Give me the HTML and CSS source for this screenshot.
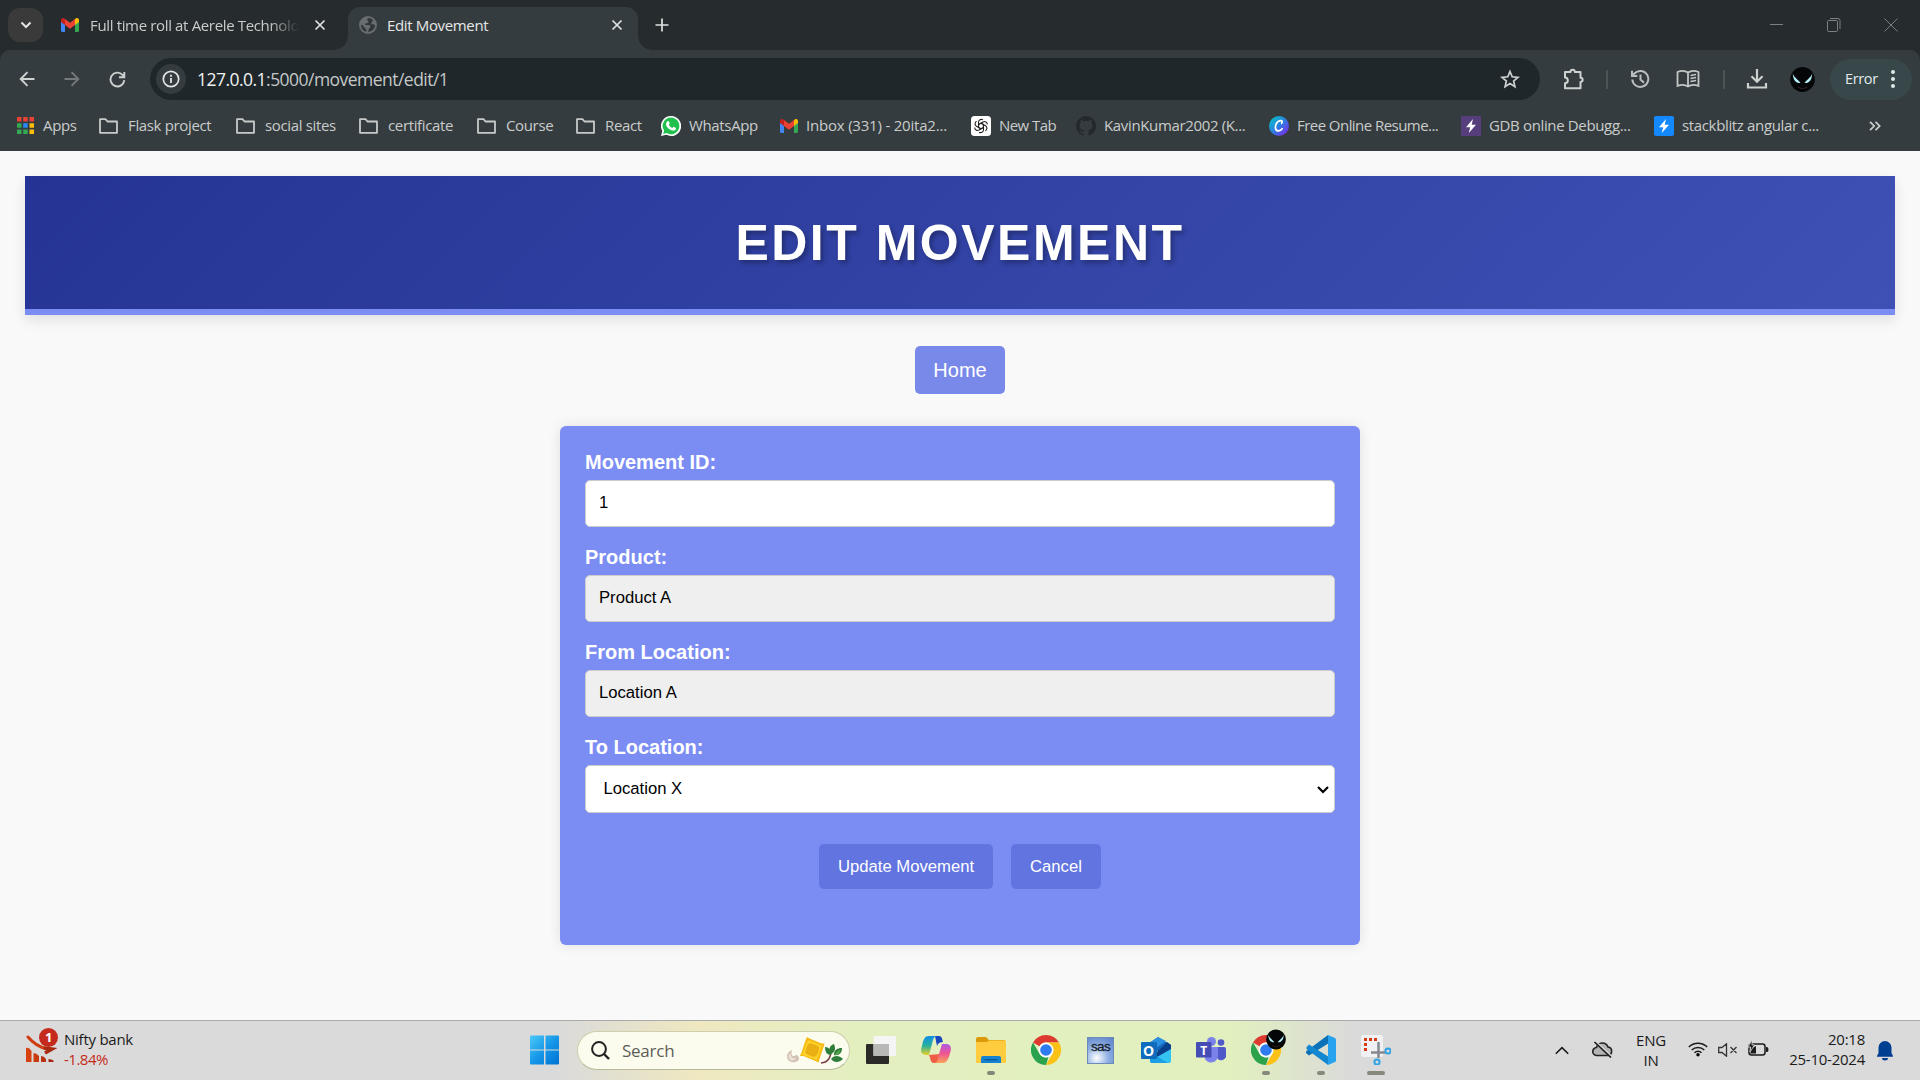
FILE: index.html
```html
<!DOCTYPE html>
<html lang="en">
<head>
<meta charset="utf-8">
<title>Edit Movement</title>
<link rel="stylesheet" href="styles.css">
</head>
<body>
<svg class="defs" aria-hidden="true">
  <defs>
    <symbol id="gmail" viewBox="0 0 18 14">
      <path fill="#4285f4" d="M0 3v9.5C0 13.300.7 14 1.500 14H4V6z"/>
      <path fill="#34a853" d="M18 3v9.500c0 .8-.7 1.500-1.500 1.500H14V6z"/>
      <path fill="#fbbc04" d="M14 1v6l4-3V2c0-1.900-2-2.500-3.300-1.500z"/>
      <path fill="#ea4335" d="M4 7V1l5 3.800L14 1v6l-5 3.800z"/>
      <path fill="#c5221f" d="M0 2v2l4 3V1L3.300.5C2-.5 0 .1 0 2z"/>
    </symbol>
    <symbol id="folder" viewBox="0 0 21 18">
      <path fill="none" stroke="#c7cac9" stroke-width="1.800" stroke-linejoin="round" d="M2 2.200h5.500l2 2.300H19v11.300H2z"/>
    </symbol>
    <symbol id="close" viewBox="0 0 12 12">
      <path fill="none" stroke="#dfe2e1" stroke-width="1.700" d="M1.500 1.500l9 9M10.500 1.500l-9 9"/>
    </symbol>
    <symbol id="bolt" viewBox="0 0 20 20">
      <path fill="#fff" d="M12 3L5 11.300h4.200L7.800 17 15 8.700h-4.300z"/>
    </symbol>
    <symbol id="chrome" viewBox="0 0 30 30">
      <path fill="#dd3a30" d="M15 0a15 15 0 0 1 13 7.500H15a7.500 7.500 0 0 0-6.500 3.750L2 7.500A15 15 0 0 1 15 0z"/>
      <path fill="#fbc116" d="M28 7.500A15 15 0 0 1 15 30l6.500-11.250A7.500 7.500 0 0 0 21.500 11.250L15 7.500z"/>
      <path fill="#2ba24c" d="M2 7.500l6.500 11.250a7.500 7.500 0 0 0 9 3.300L15 30A15 15 0 0 1 2 7.500z"/>
      <circle cx="15" cy="15" r="7.400" fill="#fff"/>
      <circle cx="15" cy="15" r="5.800" fill="#2f7cf0"/>
    </symbol>
    <symbol id="venom" viewBox="0 0 25 25">
      <ellipse cx="12.500" cy="12.500" rx="12.300" ry="12.500" fill="#050607"/>
      <path fill="#b5f1f8" d="M2.800 6.500c1 3.500 4.500 5.500 7.700 9.500C6.500 16.500 3 13.500 2.800 6.500zM22.200 6.500c-1 3.500-4.500 5.500-7.700 9.500 4 .5 7.500-2.500 7.700-9.500z"/>
      <path fill="none" stroke="#3b2324" d="M8 20c3 2 6 2 9 0"/>
    </symbol>
  </defs>
</svg>

<div class="browser">
  <div class="tabstrip">
    <div class="tabsearch"><svg width="12" height="8" viewBox="0 0 12 8"><path fill="none" stroke="#e3e5e4" stroke-width="2" d="M1.500 1.500L6 6l4.500-4.500"/></svg></div>
    <div class="tab">
      <svg width="18" height="14"><use href="#gmail"/></svg>
      <span class="tab-title faded">Full time roll at Aerele Technolo</span>
      <svg class="x" width="12" height="12"><use href="#close"/></svg>
    </div>
    <div class="tab active">
      <svg width="18" height="18" viewBox="0 0 18 18"><circle cx="9" cy="9" r="9" fill="#686d70"/><path fill="#30383a" d="M10 2c-2 .5-2.500 2-1 3 1.500 1 0 2.200-1.500 2.200-1.800 0-2 1.800-.5 1.800h3c1.500 0 2 2 .5 3-1 .8-.5 2.500-1.800 3.800C12.500 16 16 13 16 9.300 15 8 13.500 8 12.500 8.500 11.500 7 13 6 14 4.200 13 3 11.500 2.200 10 2zM2 8.500C1.800 12 4 15 7 15.700c1-1.600.3-2.600-1-3.400C5 11.500 5 9.500 2 8.500z"/></svg>
      <span class="tab-title">Edit Movement</span>
      <svg class="x" width="12" height="12"><use href="#close"/></svg>
    </div>
    <svg class="plus" width="14" height="14" viewBox="0 0 14 14"><path stroke="#dfe2e1" stroke-width="1.700" d="M7 .5v13M.5 7h13"/></svg>
    <div class="wincontrols">
      <svg width="14" height="14" viewBox="0 0 14 14"><path stroke="#7c8081" d="M0 6.500h13"/></svg>
      <svg width="14" height="14" viewBox="0 0 14 14"><path fill="none" stroke="#7c8081" d="M.5 3.500q0-1 1-1h8q1 0 1 1v9q0 1-1 1h-8q-1 0-1-1zM3 .5h8q2 0 2 2V11"/></svg>
      <svg width="14" height="14" viewBox="0 0 14 14"><path stroke="#7c8081" d="M.5.5l13 13M13.500.5l-13 13"/></svg>
    </div>
  </div>

  <div class="toolbar">
    <svg width="16" height="16" viewBox="0 0 16 16"><path fill="none" stroke="#cdd1d0" stroke-width="1.900" d="M15.500 8H2M8.500 1.200L1.700 8l6.800 6.800"/></svg>
    <svg width="16" height="16" viewBox="0 0 16 16"><path fill="none" stroke="#747a7b" stroke-width="1.900" d="M.5 8H14M7.500 1.200L14.300 8l-6.800 6.800"/></svg>
    <svg width="17" height="17" viewBox="0 0 17 17"><path fill="none" stroke="#cdd1d0" stroke-width="1.900" d="M15.300 9.200a6.900 6.900 0 1 1-1.800-5.400L15 5.600M15.300 1v5.300H10"/></svg>
    <div class="omnibox">
      <span class="info"><svg width="18" height="18" viewBox="0 0 18 18"><circle cx="9" cy="9" r="7.700" fill="none" stroke="#e3e5e4" stroke-width="1.700"/><path stroke="#e3e5e4" stroke-width="1.800" d="M9 8v5M9 4.800v1.900"/></svg></span>
      <span class="url"><b>127.0.0.1</b>:5000/movement/edit/1</span>
      <svg width="20" height="20" viewBox="0 0 20 20"><path fill="none" stroke="#cdd1d0" stroke-width="1.700" stroke-linejoin="miter" d="M10 2.500l2.200 5.300 5.700.5-4.300 3.700 1.300 5.600L10 14.600l-4.900 3L6.400 12 2.100 8.300l5.700-.5z"/></svg>
    </div>
    <div class="tools">
      <svg width="22" height="22" viewBox="0 0 22 22"><path fill="none" stroke="#cdd1d0" stroke-width="2" stroke-linejoin="round" d="M2 4h5.500a2 2 0 0 1 4.300 0H17.500v5.700a2 2 0 0 1 0 4.300v6.200H2v-5a2.800 2.800 0 0 0 0-5.600z"/></svg>
      <i class="sep"></i>
      <svg width="20" height="20" viewBox="0 0 20 20"><path fill="none" stroke="#b9bebe" stroke-width="2" d="M2.300 10.500A8 8 0 1 0 4.700 4.200L2 7M2 1.800V7h5.300M10.500 5.500v5l3.500 3.300"/></svg>
      <svg width="24" height="20" viewBox="0 0 24 20"><path fill="none" stroke="#c2c7c6" stroke-width="1.800" d="M12 3.500C9 1.500 5 1.500 1.500 3v14c3.500-1.500 7.500-1.500 10.500.5 3-2 7-2 10.500-.5V3C19 1.500 15 1.500 12 3.500zM12 3.500v14"/><path stroke="#c2c7c6" stroke-width="1.600" d="M14.500 6.500l5.500-1M14.500 9.500l5.500-1M14.500 12.500l5.500-1"/></svg>
      <i class="sep"></i>
      <svg width="22" height="22" viewBox="0 0 22 22"><path fill="none" stroke="#cdd1d0" stroke-width="2.200" d="M11 1v12M5.500 8.200L11 13.700l5.500-5.500M2 15v4.500h18V15"/></svg>
      <svg class="avatar" width="25" height="25"><use href="#venom"/></svg>
    </div>
    <div class="error">Error <svg width="4" height="18" viewBox="0 0 4 18"><g fill="#dfe8e8"><circle cx="2" cy="2" r="2"/><circle cx="2" cy="9" r="2"/><circle cx="2" cy="16" r="2"/></g></svg></div>
  </div>

  <div class="bookmarks">
    <div class="bm"><svg width="17" height="17" viewBox="0 0 17 17"><path fill="#ea4335" d="M0 0h4.500v4.500H0zM6.200 0h4.500v4.500H6.200zM12.500 0H17v4.500h-4.500z"/><path fill="#34a853" d="M0 6.200h4.500v4.500H0zM0 12.500h4.500V17H0zM6.200 12.500h4.500V17H6.200z"/><path fill="#2a8af5" d="M6.200 6.200h4.500v4.500H6.200z"/><path fill="#fbbc04" d="M12.500 6.200H17v4.500h-4.500zM12.500 12.500H17V17h-4.500z"/></svg><span>Apps</span></div>
    <div class="bm"><svg width="21" height="18"><use href="#folder"/></svg><span>Flask project</span></div>
    <div class="bm"><svg width="21" height="18"><use href="#folder"/></svg><span>social sites</span></div>
    <div class="bm"><svg width="21" height="18"><use href="#folder"/></svg><span>certificate</span></div>
    <div class="bm"><svg width="21" height="18"><use href="#folder"/></svg><span>Course</span></div>
    <div class="bm"><svg width="21" height="18"><use href="#folder"/></svg><span>React</span></div>
    <div class="bm tight"><svg width="20" height="20" viewBox="0 0 20 20"><path fill="#fff" d="M10 0a10 10 0 1 1-4.600 18.800L0 20l1.300-5A10 10 0 0 1 10 0z"/><path fill="#1fc04b" d="M10 1.500a8.400 8.400 0 1 1-4.400 15.600l-3.400.8.9-3.300A8.400 8.400 0 0 1 10 1.500z"/><path fill="#fff" d="M6.200 5.500c1-1 1.600-.6 2.400 1.600.2.600-.3 1-.8 1.600.9 1.600 2 2.500 3.600 3.200.6-.7.900-1.300 1.500-1 2.200 1 2.400 1.100 1.900 2.400-.6 1.300-2.600 1.700-4.600.9-2.500-1-4.700-3.300-5.100-5.300-.2-1.400.2-2.600 1.100-3.400z"/></svg><span>WhatsApp</span></div>
    <div class="bm tight loose"><svg width="18" height="14"><use href="#gmail"/></svg><span>Inbox (331) - 20ita2...</span></div>
    <div class="bm tight"><svg width="20" height="20" viewBox="0 0 20 20"><rect width="20" height="20" rx="3.500" fill="#fff"/><g fill="none" stroke="#222" stroke-width="1.100"><path id="petal" d="M10 7.200l2.500 1.400v5.200a2.900 2.900 0 0 1-4.400 2.400"/><use href="#petal" transform="rotate(60 10 10)"/><use href="#petal" transform="rotate(120 10 10)"/><use href="#petal" transform="rotate(180 10 10)"/><use href="#petal" transform="rotate(240 10 10)"/><use href="#petal" transform="rotate(300 10 10)"/></g></svg><span class="snug">New Tab</span></div>
    <div class="bm tight"><svg width="20" height="20" viewBox="0 0 16 16"><path fill="#24292d" d="M8 0a8 8 0 0 0-2.530 15.590c.4.070.55-.17.55-.38v-1.490c-2.010.37-2.530-.49-2.690-.94-.09-.23-.48-.94-.82-1.130-.28-.15-.68-.52-.01-.53.63-.01 1.080.58 1.230.82.720 1.210 1.870.87 2.330.66.070-.52.280-.87.510-1.070-1.780-.2-3.640-.89-3.640-3.950 0-.87.310-1.590.82-2.150-.08-.2-.36-1.020.08-2.120 0 0 .67-.21 2.200.82a7.600 7.600 0 0 1 4 0c1.530-1.040 2.200-.82 2.200-.82.440 1.100.16 1.920.08 2.120.51.560.82 1.270.82 2.150 0 3.070-1.870 3.750-3.650 3.950.29.250.54.730.54 1.480v2.200c0 .21.150.46.550.38A8 8 0 0 0 8 0z"/></svg><span>KavinKumar2002 (K...</span></div>
    <div class="bm tight"><svg width="20" height="20" viewBox="0 0 20 20"><defs><linearGradient id="cv" x1="0" y1="0" x2="1" y2="1"><stop offset=".1" stop-color="#05bfcb"/><stop offset=".5" stop-color="#2d7fe0"/><stop offset=".9" stop-color="#7a2ae8"/></linearGradient></defs><circle cx="10" cy="10" r="10" fill="url(#cv)"/><path fill="none" stroke="#fff" stroke-width="1.700" stroke-linecap="round" d="M12.600 7.300c1.300-1.600.5-3-1.500-2.700-3 .5-5 4-4.700 7.200.3 3.700 4.500 4.200 6.800 1"/></svg><span class="snug">Free Online Resume...</span></div>
    <div class="bm tight"><svg class="gdb" width="20" height="20"><use href="#bolt"/></svg><span>GDB online Debugg...</span></div>
    <div class="bm tight"><svg class="blitz" width="20" height="20"><use href="#bolt"/></svg><span>stackblitz angular c...</span></div>
    <svg class="more" width="12" height="10" viewBox="0 0 12 10"><path fill="none" stroke="#cdd1d0" stroke-width="1.700" d="M1 .8L5.200 5 1 9.200M6.500.8L10.700 5 6.500 9.200"/></svg>
  </div>
</div>

<main class="page">
  <header class="banner"><h1>EDIT MOVEMENT</h1></header>
  <nav class="nav"><a class="home">Home</a></nav>
  <form class="card">
    <label class="label">Movement ID:</label>
    <div class="field">1</div>
    <label class="label">Product:</label>
    <div class="field readonly">Product A</div>
    <label class="label">From Location:</label>
    <div class="field readonly">Location A</div>
    <label class="label">To Location:</label>
    <div class="field select">Location X<svg width="12" height="8" viewBox="0 0 12 8"><path fill="none" stroke="#000" stroke-width="2.200" d="M1 1l5 5 5-5"/></svg></div>
    <div class="actions"><span class="btn update">Update Movement</span><span class="btn cancel">Cancel</span></div>
  </form>
</main>

<footer class="taskbar">
  <div class="widget">
    <svg width="32" height="36" viewBox="0 0 32 36"><path fill="#d8400f" d="M0 20q3-1 5.500 3v11H0z"/><path fill="#c93a10" d="M7.500 25q3 0 5.500 3v6H7.500z"/><path fill="#b93012" d="M15 28q3 0 5 3v3h-5z"/><path fill="#a82512" d="M22.500 31q3 0 5 1.500V34h-5z"/><path fill="none" stroke="#cf3c10" stroke-width="3" stroke-linecap="round" d="M2 9c5 6 11 10 19 12"/><path fill="none" stroke="#a82810" stroke-width="3.500" d="M18 20l8 1-7 4"/><circle cx="22.500" cy="9.500" r="9.500" fill="#c42b1c"/></svg>
    <b class="count">1</b>
    <div class="stock"><span>Nifty bank</span><span class="down">-1.84%</span></div>
  </div>
  <svg class="win" width="30" height="30" viewBox="0 0 30 30"><defs><linearGradient id="wg" x1="0" y1="0" x2="1" y2="1"><stop stop-color="#4cc9f8"/><stop offset=".5" stop-color="#1697e8"/><stop offset="1" stop-color="#0072d4"/></linearGradient></defs><path fill="url(#wg)" d="M0 1.500Q0 .5 1 .5h13v14H0zM15.500.5H28q1 0 1 1v13H15.500zM0 15.500h14v14H1q-1 0-1-1zM15.500 15.500H29v13q0 1-1 1H15.500z"/></svg>
  <div class="search">
    <svg width="19" height="19" viewBox="0 0 19 19"><circle cx="8" cy="8" r="6.900" fill="none" stroke="#222" stroke-width="2"/><path stroke="#222" stroke-width="2.400" d="M13 13l5 5"/></svg>
    <span>Search</span>
    <svg width="56" height="28" viewBox="0 0 56 28"><path fill="#d3c2b4" d="M5 13c-5 2-6.500 7-3.500 10.500 3.500 3 9.500 2 10.500-1.500 0-2-1-4-3-4-2 2-4 1-4.500-1 0-1 0-2 .5-4z"/><path fill="#eadfd4" d="M3 16c-2.500 3-2 7 2 7.500 2 0 4-1 4-2.500-3 1-5-1-6-5z"/><path fill="#f6b90f" d="M20 0l2.500 1.500 12 5 3 0-1 3.500-4 12-1 3.500-3-1.500-12-5-3.500 0 1.500-3.500 4-12z"/><path fill="#fdd22c" d="M21 3l14 5.500-5 14.500-15-5.500z"/><rect x="19" y="7" width="12.500" height="12" rx="4" fill="#eab013" transform="rotate(20 25 13)"/><path fill="none" stroke="#7b3f46" stroke-width="1.500" d="M34 26c8-1 9-5 11-14"/><path fill="#2f7d3a" d="M47 7c-5 2-6 6-3 10 4-2 5-5 3-10zM38 10c0 5 2 8 6 8 0-5-2-8-6-8zM55 11c-5 0-8 2-8 7 5 1 8-2 8-7zM56 22c-4-4-9-4-12 0 3 4 8 4 12 0z"/><path fill="#5aa84e" d="M53 13c-3 1-4 3-5 5 3 0 5-2 5-5z"/></svg>
  </div>
  <div class="apps">
    <div class="app"><svg width="30" height="28" viewBox="0 0 30 28"><rect y="8" width="23" height="20" rx="1" fill="#2b2a29"/><rect x="7.500" width="22.500" height="20" rx="1" fill="#f5f5f6"/><path fill="#b8b9b7" d="M7.500 8H23v12H7.500z"/></svg></div>
    <div class="app"><svg width="30" height="28" viewBox="0 0 30 28"><defs><linearGradient id="ca" x1="0" y1="0" x2="0" y2="1"><stop stop-color="#128ee4"/><stop offset=".5" stop-color="#26b0a0"/><stop offset="1" stop-color="#e8cf25"/></linearGradient><linearGradient id="cb" x1="0" y1="0" x2="0" y2="1"><stop stop-color="#b058e6"/><stop offset=".5" stop-color="#ee5591"/><stop offset="1" stop-color="#fba355"/></linearGradient></defs><path fill="#1a46c0" d="M14 0h4c3 0 3 3 4 6-3 0-5 1-6 4z"/><path fill="#f05d46" d="M8 19c2 4 1 8 5 8h4l2-9z"/><path fill="url(#ca)" d="M8 0h8c-3 0-4 3-5 8l-3 11H5c-5 0-6-4-4-9C2 5 3 0 8 0z"/><path fill="url(#cb)" d="M22 27h-9c4 0 4-5 5-9l3-10h4c5 0 6 4 4 9-1 5-3 10-7 10z"/></svg></div>
    <div class="app run"><svg width="30" height="27" viewBox="0 0 30 27"><path fill="#dc9a09" d="M0 2q0-2 2-2h8l3 3h16v8H0z"/><path fill="#ffcb3f" d="M0 6q0-1 1-1h10l2-1.500h16q1 0 1 1V25q0 1-1 1H1q-1 0-1-1z"/><path fill="#1583cf" d="M5 26v-5q0-2 2-2h16q2 0 2 2v5z"/><path stroke="#0b5a9c" stroke-width="1.300" d="M8.500 22.700h13"/></svg></div>
    <div class="app"><svg width="30" height="30"><use href="#chrome"/></svg></div>
    <div class="app"><div class="sas">sas</div></div>
    <div class="app"><svg width="30" height="26" viewBox="0 0 30 26"><path fill="#1468bd" d="M5 8L17 0l13 8v6H5z"/><path fill="#2b8fe0" d="M6 8L17 0l8 4-14 10z"/><path fill="#0a3f8c" d="M14 17l12-12 4 3v5l-14 8z"/><path fill="#35c3f4" d="M30 12v12q0 2-2 2H12q-3 0-3-2z"/><path fill="#1d9fe6" d="M9 15l18 11H11q-2 0-2-2z"/><rect y="5" width="16" height="17" rx="1" fill="#0f6cbd"/></svg><b class="olk">O</b></div>
    <div class="app"><svg width="30" height="26" viewBox="0 0 30 26"><circle cx="15.500" cy="4.500" r="4.500" fill="#7b83eb"/><circle cx="25" cy="5.500" r="3.300" fill="#5059c9"/><path fill="#5059c9" d="M20 10h8q2 0 2 2v5a5 5 0 0 1-9 4z"/><path fill="#7b83eb" d="M10 10h12v9a7 7 0 0 1-13 3z"/><rect y="5" width="15.500" height="15.500" rx="1" fill="#454db5"/></svg><b class="tms">T</b></div>
    <div class="app run"><svg width="30" height="30"><use href="#chrome"/></svg><svg class="venom" width="20" height="21"><use href="#venom"/></svg></div>
    <div class="app run"><svg width="30" height="30" viewBox="0 0 30 30"><path fill="#0b72b8" d="M22 0l1 8L3 20.500 0 18q-.5-1 .5-2z"/><path fill="#1388d0" d="M.3 12.500L3 9.500 23 22l-1 8L.5 14z"/><path fill="#27a3ee" d="M22 0l7 3q1 .5 1 1.500v21q0 1-1 1.500l-7 3z"/></svg></div>
    <div class="app run wide"><svg width="30" height="30" viewBox="0 0 30 30"><rect width="22" height="22" rx="2" fill="#f0f1f3"/><path fill="none" stroke="#d83b12" stroke-width="3" stroke-dasharray="3 2" d="M16 4.500H4.500V17"/><path stroke="#85898f" stroke-width="2.500" d="M17.500 7v16M10 17.500h14"/><g fill="none" stroke="#2ea3e6" stroke-width="2"><circle cx="27" cy="16" r="2.600"/><circle cx="16" cy="27" r="2.600"/></g></svg></div>
  </div>
  <div class="tray">
    <svg width="14" height="9" viewBox="0 0 14 9"><path fill="none" stroke="#1b1b1b" stroke-width="1.600" d="M.8 7.800L7 1.600l6.200 6.200"/></svg>
    <svg class="cloud" width="21" height="17" viewBox="0 0 21 17"><path fill="#b4b4b4" stroke="#222" stroke-width="1.600" d="M5 14.500a4 4 0 0 1-.5-8 6 6 0 0 1 11.500-.5 4.300 4.300 0 0 1 0 8.500z"/><path stroke="#dadada" stroke-width="2.800" d="M4 1.500l15 14"/><path stroke="#1b1b1b" stroke-width="1.700" d="M2.500 1L19 16.500"/></svg>
    <div class="lang"><span>ENG</span><span>IN</span></div>
    <svg class="wifi" width="20" height="16" viewBox="0 0 20 16"><g fill="none" stroke="#1b1b1b" stroke-width="1.500"><path d="M.8 6a13 13 0 0 1 18.400 0M3.700 9a9 9 0 0 1 12.600 0M6.500 11.800a5 5 0 0 1 7 0"/></g><circle cx="10" cy="13.700" r="1.700"/></svg>
    <svg class="vol" width="20" height="14" viewBox="0 0 20 14"><path fill="none" stroke="#333" stroke-width="1.300" d="M.7 4.500H4L8.500.8v12.400L4 9.500H.7zM12.500 4l6 6M18.500 4l-6 6"/></svg>
    <svg class="bat" width="21" height="17" viewBox="0 0 21 17"><rect x="1" y="4" width="16" height="11" rx="2.500" fill="none" stroke="#1b1b1b" stroke-width="1.500"/><path fill="#1b1b1b" d="M18 7h1q1.500 0 1.500 2.500T19 12h-1zM2.500 13.500V9L8 6v7.500z"/><path fill="#1b1b1b" stroke="#dadada" stroke-width=".8" d="M4 0L0 7h2.700L2 12l4.500-7H4z"/></svg>
    <div class="clock"><span>20:18</span><span>25-10-2024</span></div>
    <svg class="bell" width="16" height="20" viewBox="0 0 16 20"><path fill="#003e92" d="M8 0a6.500 6.500 0 0 1 6.500 6.500V12l1.500 3v.8H0V15l1.500-3V6.500A6.500 6.500 0 0 1 8 0zM5 17h6a3 2.500 0 0 1-6 0z"/></svg>
  </div>
</footer>
</body>
</html>
```
FILE: styles.css
```css
* { box-sizing: border-box; }
html, body { margin: 0; height: 100%; }
body {
  width: 1920px;
  height: 1080px;
  overflow: hidden;
  display: flex;
  flex-direction: column;
  background: #f9f9f9;
  font-family: "Liberation Sans", Arial, sans-serif;
}
svg { display: block; flex: none; }
.defs { position: absolute; width: 0; height: 0; }

/* browser chrome */
.browser {
  flex: none;
  height: 151px;
  background: #262b2d;
  color: #c9cccb;
  font-family: "Open Sans", "Noto Sans", sans-serif;
  font-size: 15px;
  letter-spacing: -0.35px;
  white-space: nowrap;
}
.tabstrip { display: flex; height: 50px; padding-left: 8px; }
.tabsearch {
  width: 35px; height: 34px; margin-top: 8px;
  display: flex; align-items: center; justify-content: center;
  border-radius: 12px; background: #3a3a3a;
}
.tab { display: flex; align-items: center; width: 305px; padding: 0 22px 0 18px; }
.tab-title { flex: 1; margin-left: 11px; overflow: hidden; }
.faded { margin-right: 15px; -webkit-mask-image: linear-gradient(90deg, #000 86%, transparent); mask-image: linear-gradient(90deg, #000 86%, transparent); }
.tab.active {
  position: relative;
  width: 290px; height: 43px; margin-top: 7px; padding: 0 15px 7px 11px;
  border-radius: 12px 12px 0 0; background: #353c3f; color: #e6e8e7;
}
.active .tab-title { margin-left: 10px; }
.active::before, .active::after {
  content: ""; position: absolute; bottom: 0; width: 14px; height: 14px;
}
.active::before { left: -14px; background: radial-gradient(circle at 0 0, transparent 13.500px, #353c3f 14px); }
.active::after { right: -14px; background: radial-gradient(circle at 100% 0, transparent 13.500px, #353c3f 14px); }
.plus { margin: 18px 0 0 17px; }
.wincontrols { display: flex; gap: 43px; margin: 18px 22px 0 auto; }

.toolbar {
  display: flex; align-items: center; height: 58px; padding: 0 8px 0 19px;
  background: #353c3f; border-radius: 10px 10px 0 0;
}
.toolbar > svg { margin-right: 29px; }
.toolbar > svg:nth-of-type(3) { margin-right: 24px; }
.omnibox {
  display: flex; align-items: center; width: 1390px; height: 42px; padding: 0 20px 0 6px;
  border-radius: 21px; background: #1f272a;
}
.info { display: flex; align-items: center; justify-content: center; width: 30px; height: 30px; border-radius: 50%; background: #353c3f; }
.url { flex: 1; margin-left: 11px; font-size: 17.500px; letter-spacing: -0.53px; color: #c4c8c8; }
.url b { font-weight: 400; color: #f0f2f2; }
.tools {
  display: grid; align-items: center; justify-items: center;
  grid-template-columns: 44px 22px 44px 52px 20px 46px 46px;
  width: 290px; height: 42px; padding-left: 12px;
}
.avatar { margin-right: 2px; }
.sep { width: 2px; height: 19px; background: #4b5355; }
.error {
  display: flex; align-items: center; gap: 13px; width: 82px; height: 41px; padding: 0 0 1px 15px;
  border-radius: 21px; background: #37474a; color: #e2ebea; font-size: 14.500px;
}

.bookmarks {
  display: grid; align-items: center; height: 43px; padding: 0 0 8px 17px;
  grid-template-columns: 81px 137px 123px 118px 99px 86px 119px 191px 105px 193px 192px 193px 215px 14px;
  background: #353c3f;
}
.bm { display: flex; align-items: center; gap: 9px; }
.bm span { margin-top: -1px; }
.bm.tight { gap: 8px; }
.loose { letter-spacing: -0.2px; }
.snug { letter-spacing: -0.55px; }
.gdb { background: #563d7c; }
.blitz { background: #1389fd; border-radius: 2px; }

/* page */
.page { flex: 1; padding: 25px 25px 0; }
.banner {
  height: 139px; padding-top: 38px; text-align: center;
  background: linear-gradient(135deg, #253494, #3f51b5);
  background-origin: border-box;
  border-bottom: 6px solid #7b8df2;
  box-shadow: 0 5px 12.500px rgba(0, 0, 0, 0.1);
}
.banner h1 {
  margin: 0; font-size: 50px; line-height: 58px; letter-spacing: 2.500px; color: #fff;
  text-shadow: 2.500px 2.500px 5px rgba(0, 0, 0, 0.3);
}
.nav { display: flex; justify-content: center; margin-top: 31px; }
.home {
  width: 90px; height: 48px; line-height: 49px; text-align: center;
  border-radius: 5px; background: #7989e9; color: #fff; font-size: 20px;
}
.card {
  width: 800px; height: 519px; margin: 32px auto 0; padding: 25px;
  border-radius: 6px; background: #7b8df2;
  box-shadow: 0 0 12.500px rgba(0, 0, 0, 0.1);
}
.label { display: block; height: 29px; line-height: 22px; color: #fff; font-size: 20px; font-weight: 700; }
.field {
  display: flex; justify-content: space-between; height: 47px; margin-bottom: 19px; padding: 0 13px; line-height: 43px;
  border: 1px solid #ccc; border-radius: 5px; background: #fff; color: #000; font-size: 16.670px;
}
.readonly { background: #efefef; }
.select { height: 48px; margin-bottom: 31px; padding: 0 5px 0 17.500px; line-height: 46px; }
.select svg { margin-top: 20px; }
.actions { display: flex; justify-content: center; gap: 18px; }
.btn {
  height: 45px; line-height: 46px; text-align: center; border-radius: 5px;
  background: #6174e0; color: #fff; font-size: 16.670px;
}
.update { width: 174px; }
.cancel { width: 90px; }

/* taskbar */
.taskbar {
  flex: none; display: flex; height: 60px; border-top: 1px solid #aaa;
  background: linear-gradient(90deg, #dadada 555px, #efe8c0 700px, #e4efc0 850px, #e1f0be 1230px, #dadada 1355px);
  font-family: "Open Sans", "Noto Sans", sans-serif; font-size: 15px; letter-spacing: -0.25px; color: #1b1b1b;
}
.widget { position: relative; display: flex; width: 530px; padding: 7px 0 0 26px; }
.count { position: absolute; left: 39px; top: 7px; width: 19px; line-height: 19px; text-align: center; font-size: 13px; color: #fff; }
.stock, .lang, .clock { display: flex; flex-direction: column; line-height: 20px; }
.stock { margin-left: 6px; padding-top: 1px; }
.down { color: #c42b1c; letter-spacing: -0.5px; }
.win { margin-top: 14px; }
.search {
  display: flex; align-items: center; width: 273px; height: 39px; margin: 10px 0 0 17px; padding: 0 6px 0 13px;
  border: 1px solid #cfcfae; border-bottom-color: #b7b998; border-radius: 20px; background: #fbfbee;
}
.search span { flex: 1; margin-left: 12px; font-size: 17px; color: #5d5d58; }
.apps { display: flex; margin-left: 3px; }
.app { position: relative; display: flex; align-items: center; justify-content: center; width: 55px; height: 58px; }
.run::after { content: ""; position: absolute; bottom: 4px; width: 8px; height: 4px; border-radius: 2px; background: #85887a; }
.wide::after { width: 18px; }
.sas {
  width: 27px; height: 27px; line-height: 18px; text-align: center; letter-spacing: -0.7px;
  font-family: "Liberation Sans", sans-serif; font-size: 13.500px; color: #1b1f2b; -webkit-text-stroke: 0.3px #1b1f2b;
  border: 1px solid #6d8bb8; background: radial-gradient(circle at 35% 80%, #fff, #8fb0e3 45%, #5a80c8);
}
.olk, .tms { position: absolute; left: 12px; top: 21px; width: 17px; line-height: 18px; text-align: center; font-size: 14px; color: #fff; }
.tms { font-size: 12px; line-height: 17px; }
.venom { position: absolute; left: 28px; top: 8px; }
.tray { display: flex; margin-left: auto; padding-right: 27px; }
.tray > svg { margin-top: 25px; }
.tray .cloud { margin: 20px 0 0 23px; }
.lang { width: 48px; margin-left: 14px; padding-top: 9px; text-align: center; }
.tray .wifi { margin: 20px 0 0 13px; }
.tray .vol { margin: 22px 0 0 10px; }
.tray .bat { margin: 19px 0 0 10px; }
.clock { width: 96px; padding-top: 8px; text-align: right; }
.tray .bell { margin: 20px 0 0 12px; }
```
